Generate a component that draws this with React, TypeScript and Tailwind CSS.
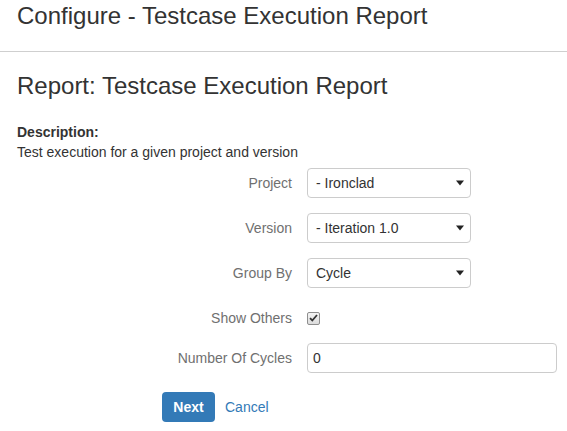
import React from "react";

function Arrow() {
  return (
    <svg width="8" height="6" viewBox="0 0 8 6" className="shrink-0">
      <path d="M0 0.5 H8 L4 5.5 Z" fill="#222" />
    </svg>
  );
}

function Select({ value }: { value: string }) {
  return (
    <div className="flex h-[30px] w-[164px] items-center justify-between rounded-[4px] border border-[#cccccc] bg-white pl-[8px] pr-[6px] text-[14px] text-[#333]">
      <span>{value}</span>
      <Arrow />
    </div>
  );
}

function Row({
  label,
  children,
  className = "",
}: {
  label: string;
  children: React.ReactNode;
  className?: string;
}) {
  return (
    <div className={"flex h-[30px] items-center " + className}>
      <div className="w-[275px] shrink-0 text-right text-[14px] text-[#707070]">{label}</div>
      <div className="ml-[15px] flex shrink-0 items-center">{children}</div>
    </div>
  );
}

export default function App() {
  return (
    <div
      className="min-h-[431px] w-full bg-white text-[#333]"
      style={{ fontFamily: '"Liberation Sans", Arial, sans-serif' }}
    >
      <div className="h-[52px] border-b border-[#cfcfcf] px-[17px] pt-[3px]">
        <h1 className="text-[24px] font-normal leading-[26.4px] text-[#333]">
          Configure - Testcase Execution Report
        </h1>
      </div>
      <div className="px-[17px]">
        <h2 className="mt-[21px] text-[24px] font-normal leading-[26.4px] text-[#333]">
          Report: Testcase Execution Report
        </h2>
        <div className="mt-[23px] text-[14px] font-bold leading-[20px] text-[#333]">
          Description:
        </div>
        <div className="text-[14px] leading-[20px] text-[#333]">
          Test execution for a given project and version
        </div>
        <div className="mt-[6px]">
          <Row label="Project">
            <Select value="- Ironclad" />
          </Row>
          <Row label="Version" className="mt-[15px]">
            <Select value="- Iteration 1.0" />
          </Row>
          <Row label="Group By" className="mt-[15px]">
            <Select value="Cycle" />
          </Row>
          <Row label="Show Others" className="mt-[15px]">
            <div className="flex h-[13px] w-[13px] items-center justify-center rounded-[2px] border border-[#8e8e8e] bg-gradient-to-b from-[#f4f4f4] to-[#dcdcdc]">
              <svg width="9" height="8" viewBox="0 0 9 8">
                <path
                  d="M1 4.2 L3.3 6.5 L8 1"
                  fill="none"
                  stroke="#333"
                  strokeWidth="1.8"
                />
              </svg>
            </div>
          </Row>
          <Row label="Number Of Cycles" className="mt-[10px]">
            <div className="flex h-[30px] w-[250px] items-center rounded-[4px] border border-[#cccccc] bg-white pl-[5px] text-[14px] text-[#333]">
              0
            </div>
          </Row>
          <div className="ml-[145px] mt-[19px] flex items-center">
            <button className="h-[30px] w-[53px] rounded-[4px] bg-[#337ab7] text-[14px] font-bold text-white">
              Next
            </button>
            <span className="ml-[10px] text-[14px] text-[#337ab7]">Cancel</span>
          </div>
        </div>
      </div>
    </div>
  );
}
